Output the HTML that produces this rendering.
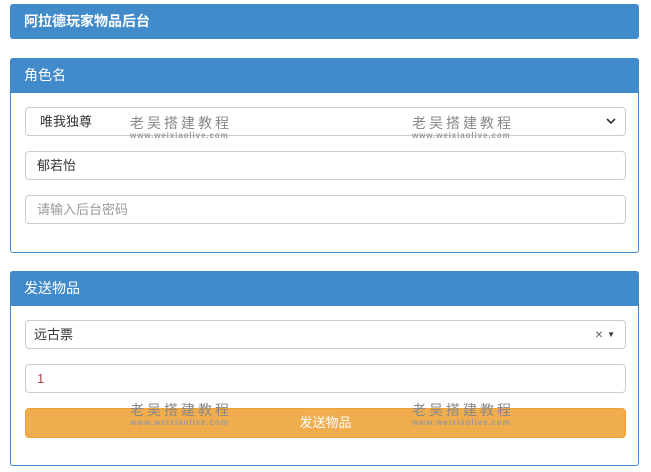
<!DOCTYPE html>
<html><head><meta charset="utf-8"><style>
*{box-sizing:border-box;margin:0;padding:0}
body{width:651px;height:472px;background:#fff;font-family:"Liberation Sans","Noto Sans CJK SC",sans-serif;font-size:13px;color:#333;position:relative;overflow:hidden}
.a{position:absolute}
.hd{background:#428bca;color:#fff;font-size:14px;padding-left:14px;border-radius:3px 3px 0 0}
.pn{border:1px solid #428bca;border-radius:3px}
.in{border:1px solid #ccc;border-radius:4px;left:25px;width:601px;height:29px;padding-left:11px;line-height:27px;font-size:13px}
.wm{color:#888;width:110px;white-space:nowrap}
.wm b{display:block;font-size:14px;font-weight:normal;letter-spacing:3px;line-height:16px;color:#888}
.wm i{display:block;font-style:normal;font-size:8px;letter-spacing:0.9px;line-height:9px;font-weight:bold;color:#999}
</style></head><body>
<div class="a hd" style="left:10px;top:4px;width:629px;height:35px;line-height:35px;border-radius:3px;font-weight:bold">阿拉德玩家物品后台</div>

<div class="a pn" style="left:10px;top:58px;width:629px;height:195px"></div>
<div class="a hd" style="left:10px;top:58px;width:629px;height:35px;line-height:35px">角色名</div>
<div class="a in" style="top:107px;padding-left:14px">唯我独尊</div>
<svg class="a" style="left:606px;top:117px" width="10" height="8"><path d="M1 2 L5 6 L9 2" stroke="#333" stroke-width="1.6" fill="none"/></svg>
<div class="a in" style="top:151px">郁若怡</div>
<div class="a in" style="top:195px;color:#999">请输入后台密码</div>

<div class="a pn" style="left:10px;top:271px;width:629px;height:195px"></div>
<div class="a hd" style="left:10px;top:271px;width:629px;height:35px;line-height:35px">发送物品</div>
<div class="a in" style="top:320px;padding-left:8px">远古票<span class="a" style="right:22px;top:0;color:#666;font-size:14px">×</span><span class="a" style="right:10px;top:0;font-size:8px">▼</span></div>
<div class="a in" style="top:364px;color:#a94442">1</div>
<div class="a" style="left:25px;top:408px;width:601px;height:30px;background:#f0ad4e;border:1px solid #eea236;border-radius:4px;color:#fff;text-align:center;line-height:28px">发送物品</div>

<div class="a wm" style="left:130px;top:115px"><b>老吴搭建教程</b><i>www.weixiaolive.com</i></div>
<div class="a wm" style="left:412px;top:115px"><b>老吴搭建教程</b><i>www.weixiaolive.com</i></div>
<div class="a wm" style="left:130px;top:402px"><b>老吴搭建教程</b><i>www.weixiaolive.com</i></div>
<div class="a wm" style="left:412px;top:402px"><b>老吴搭建教程</b><i>www.weixiaolive.com</i></div>
</body></html>
